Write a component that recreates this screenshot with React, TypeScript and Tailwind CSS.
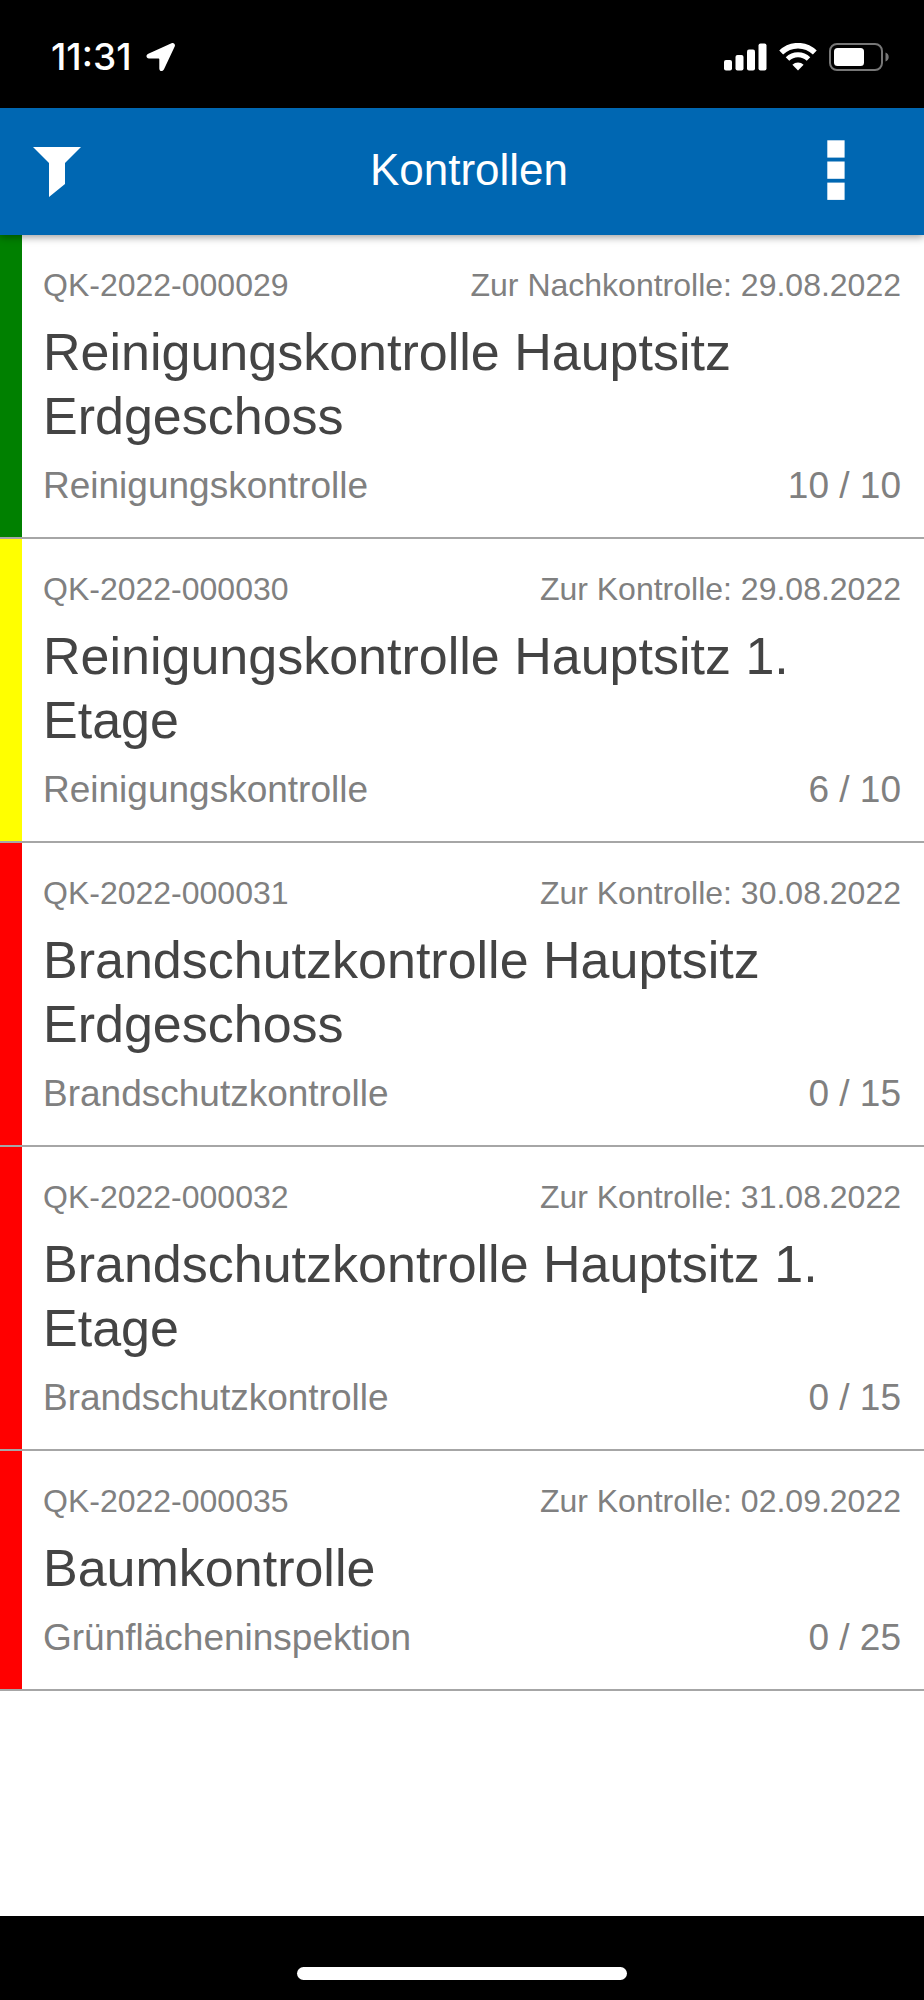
type Status = 'green' | 'yellow' | 'red';

interface Inspection {
  id: string;
  due: string;
  title: string;
  type: string;
  progress: string;
  status: Status;
}

const INSPECTIONS: Inspection[] = [
  {
    id: 'QK-2022-000029',
    due: 'Zur Nachkontrolle: 29.08.2022',
    title: 'Reinigungskontrolle Hauptsitz Erdgeschoss',
    type: 'Reinigungskontrolle',
    progress: '10 / 10',
    status: 'green',
  },
  {
    id: 'QK-2022-000030',
    due: 'Zur Kontrolle: 29.08.2022',
    title: 'Reinigungskontrolle Hauptsitz 1. Etage',
    type: 'Reinigungskontrolle',
    progress: '6 / 10',
    status: 'yellow',
  },
  {
    id: 'QK-2022-000031',
    due: 'Zur Kontrolle: 30.08.2022',
    title: 'Brandschutzkontrolle Hauptsitz Erdgeschoss',
    type: 'Brandschutzkontrolle',
    progress: '0 / 15',
    status: 'red',
  },
  {
    id: 'QK-2022-000032',
    due: 'Zur Kontrolle: 31.08.2022',
    title: 'Brandschutzkontrolle Hauptsitz 1. Etage',
    type: 'Brandschutzkontrolle',
    progress: '0 / 15',
    status: 'red',
  },
  {
    id: 'QK-2022-000035',
    due: 'Zur Kontrolle: 02.09.2022',
    title: 'Baumkontrolle',
    type: 'Grünflächeninspektion',
    progress: '0 / 25',
    status: 'red',
  },
];

const STATUS_COLORS: Record<Status, string> = {
  green: 'bg-[#008000]',
  yellow: 'bg-[#ffff00]',
  red: 'bg-[#ff0000]',
};

function StatusBar() {
  return (
    <div className="flex h-[108px] items-center justify-between bg-black pt-[6px] pr-[34px] pl-[51px] text-white">
      <div className="flex items-center gap-[14px]">
        <span className="font-['Inter',sans-serif] text-[37px] leading-[44px] font-medium">11:31</span>
        <svg className="h-[30px] w-[30px]" viewBox="0 0 30 30" fill="currentColor" aria-hidden="true">
          <path d="M25.500 1.200 2.300 11.800C-.6 13.200.2 16.500 3 16.500h9.600c.5 0 .7.200.7.700v9.200c0 3 3.400 3.600 4.700.8L28.700 4.500c1-2.200-1-4.300-3.200-3.300Z" />
        </svg>
      </div>

      <div className="flex items-center gap-3">
        <svg className="h-7 w-[43px]" viewBox="0 0 43 28" fill="currentColor" aria-hidden="true">
          <rect x="0" y="17" width="8" height="10.500" rx="2" />
          <rect x="11.500" y="12" width="8" height="15.500" rx="2" />
          <rect x="23" y="6.500" width="8" height="21" rx="2" />
          <rect x="34.500" y="0.500" width="8" height="27" rx="2" />
        </svg>
        <svg className="h-7 w-[38px]" viewBox="0 0 38 28" fill="none" stroke="currentColor" aria-hidden="true">
          <path d="M2.200 9.500a24 24 0 0 1 33.600 0" strokeWidth="5.500" />
          <path d="M8.500 16a15 15 0 0 1 21 0" strokeWidth="5" />
          <path d="M13.400 21.800a8.200 8.200 0 0 1 11.200 0L19 27.500Z" fill="currentColor" stroke="none" />
        </svg>
        <svg className="h-7 w-[61px]" viewBox="0 0 61 28" aria-hidden="true">
          <rect x="1" y="1" width="52" height="26" rx="7" fill="none" stroke="#777" strokeWidth="2" />
          <rect x="5" y="5" width="30" height="18" rx="3.500" fill="#fff" />
          <path d="M56.500 9.500c4.300 1.500 4.300 7.500 0 9Z" fill="#777" />
        </svg>
      </div>
    </div>
  );
}

function AppHeader() {
  return (
    <header className="relative z-10 flex h-[127px] items-stretch bg-[#0067b2] pb-[3px] text-white shadow-[0_2px_8px_rgba(0,0,0,0.4)]">
      <button type="button" aria-label="Filter" className="flex w-[114px] items-center justify-center pt-1">
        <svg className="h-[50px] w-12" viewBox="0 0 48 50" fill="currentColor" aria-hidden="true">
          <path d="M0 0h48L32 16v21L16 50V16Z" />
        </svg>
      </button>
      <h1 className="flex-1 self-center text-center text-[44px] leading-[52px]">Kontrollen</h1>
      <button type="button" aria-label="Menü" className="flex w-[100px] items-center pl-[3px]">
        <svg className="h-[60px] w-[18px]" viewBox="0 0 18 60" fill="currentColor" aria-hidden="true">
          <rect x="0.300" y="0.300" width="17.300" height="17.300" />
          <rect x="0.300" y="21.500" width="17.300" height="17.300" />
          <rect x="0.300" y="42.600" width="17.300" height="17.300" />
        </svg>
      </button>
    </header>
  );
}

function InspectionRow({ item }: { item: Inspection }) {
  return (
    <li className="flex border-b-2 border-[#a6a6a6]">
      <div className={`w-[22px] shrink-0 ${STATUS_COLORS[item.status]}`} />
      <div className="min-w-0 flex-1 pt-[31px] pr-[23px] pb-[29px] pl-[21px] text-[#808080]">
        <div className="flex justify-between text-[32px] leading-[38px]">
          <span>{item.id}</span>
          <span>{item.due}</span>
        </div>
        <h2 className="mt-4 text-[52px] leading-[64px] text-[#444]">{item.title}</h2>
        <div className="mt-4 flex justify-between text-[37px] leading-[44px]">
          <span>{item.type}</span>
          <span>{item.progress}</span>
        </div>
      </div>
    </li>
  );
}

export default function App() {
  return (
    <div className="flex min-h-screen flex-col bg-white font-['Liberation_Sans',Arial,sans-serif]">
      <StatusBar />
      <AppHeader />

      <main className="flex-1">
        <ul>
          {INSPECTIONS.map((item) => (
            <InspectionRow key={item.id} item={item} />
          ))}
        </ul>
      </main>

      {/* Home indicator */}
      <footer className="flex h-[84px] items-end justify-center bg-black pb-5">
        <div className="h-[13px] w-[330px] rounded-full bg-white" />
      </footer>
    </div>
  );
}
